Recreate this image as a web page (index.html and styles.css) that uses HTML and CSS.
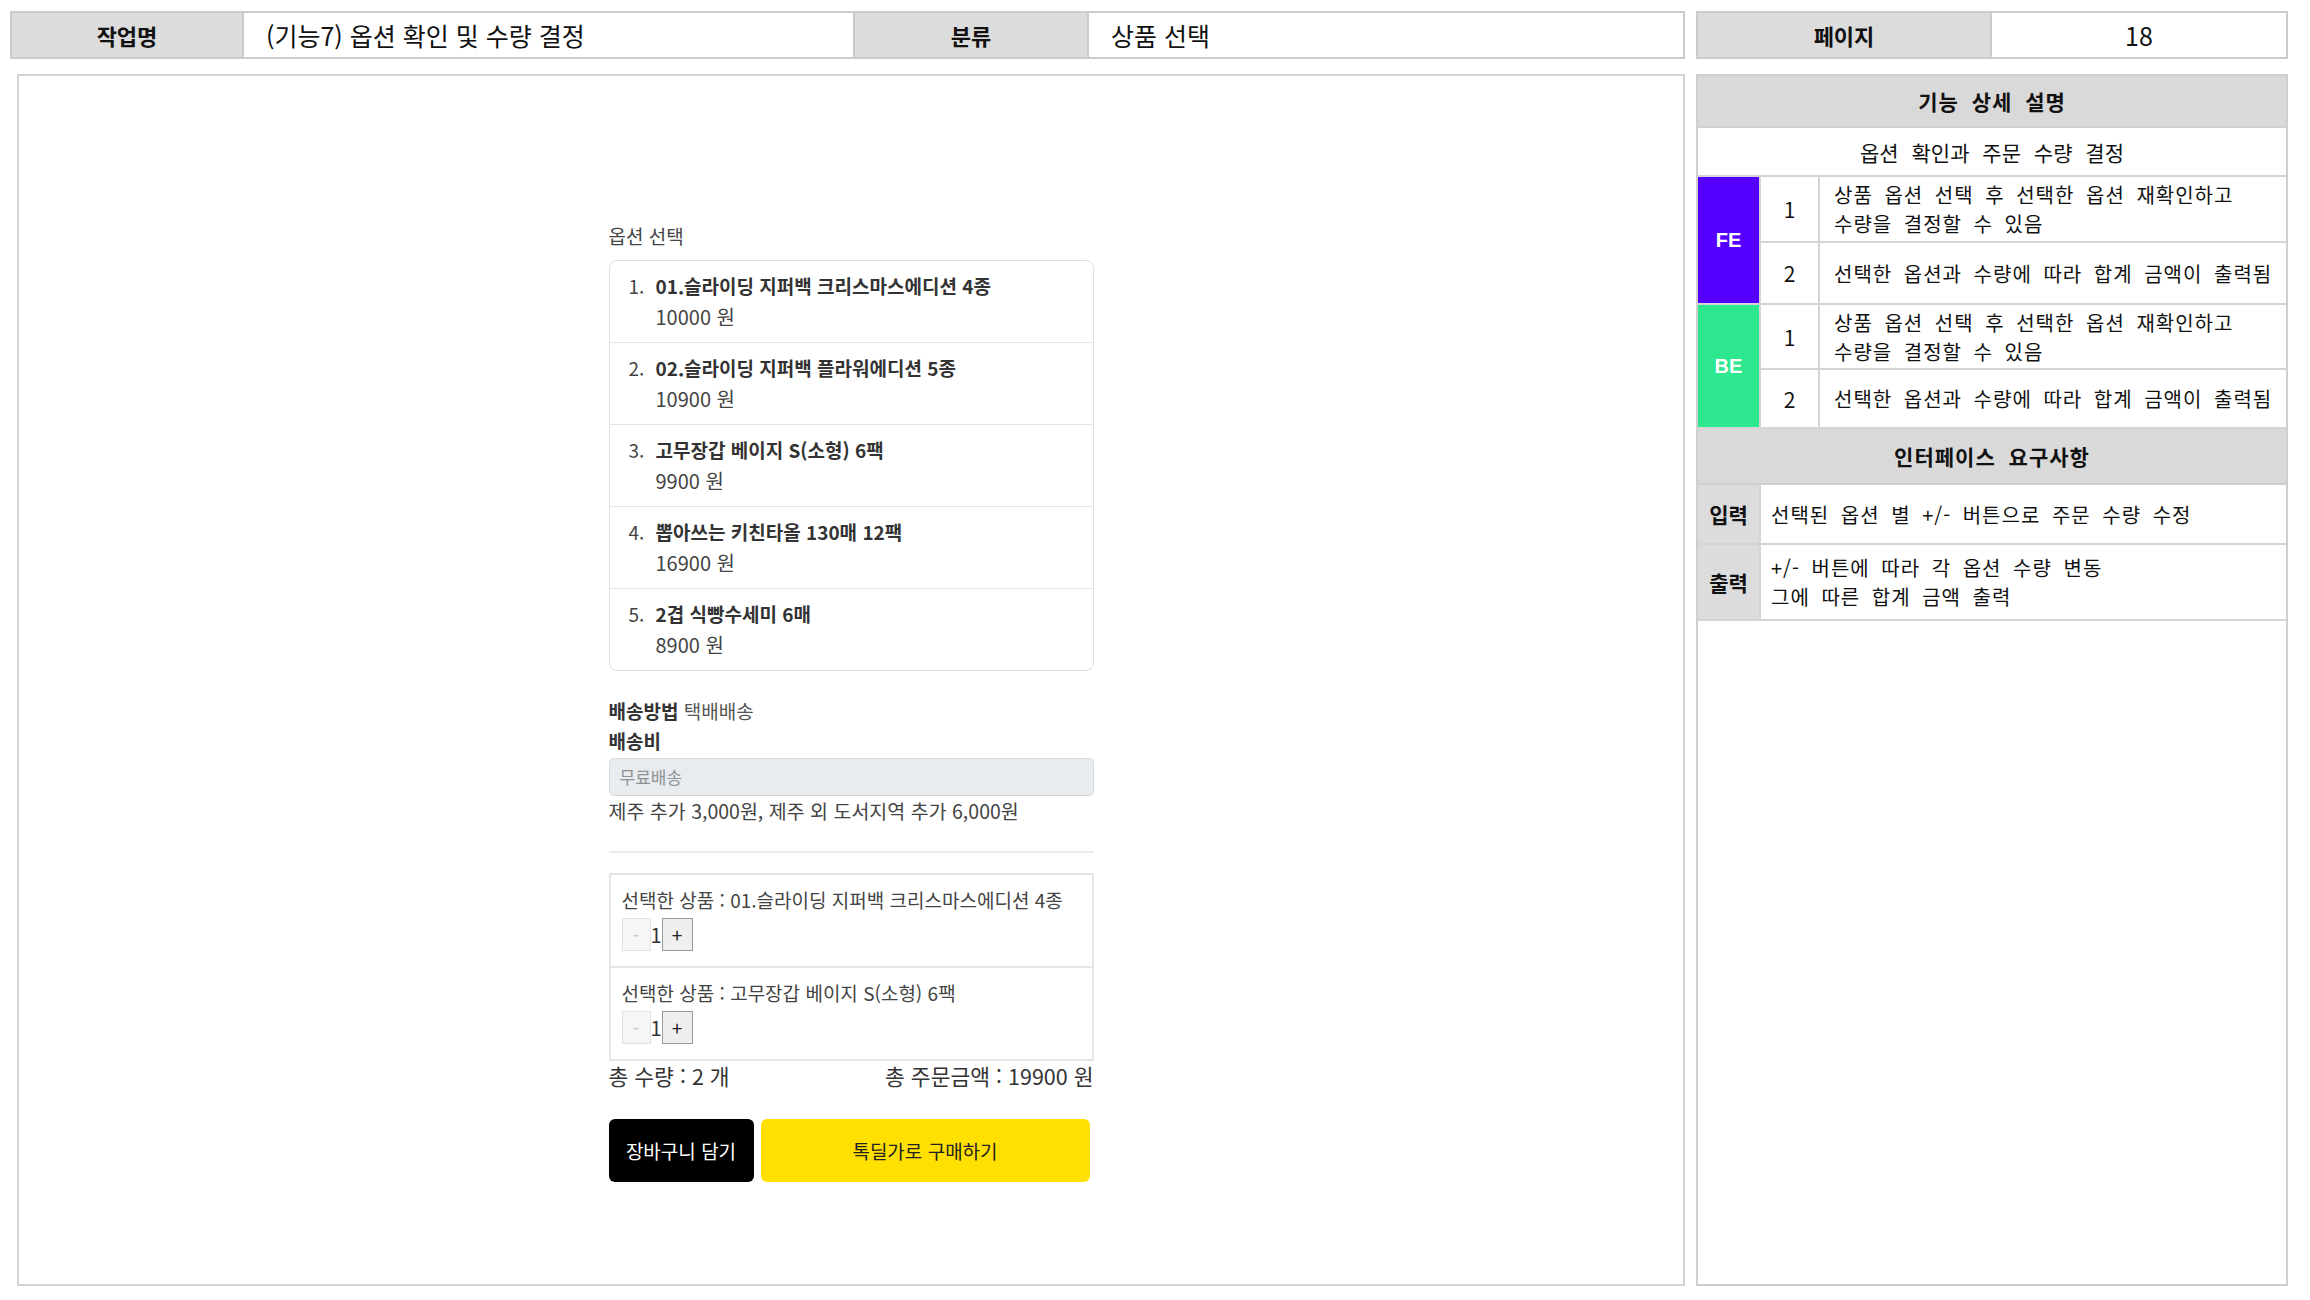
FILE: index.html
```html
<!DOCTYPE html>
<html lang="ko">
<head>
<meta charset="utf-8">
<title>옵션 확인 및 수량 결정</title>
<link rel="stylesheet" href="styles.css">
</head>
<body>
<div class="page">
  <div class="top">
    <div class="meta">
      <div class="cell lab c-job">작업명</div>
      <div class="cell val c-title">(기능7) 옵션 확인 및 수량 결정</div>
      <div class="cell lab c-cat">분류</div>
      <div class="cell val c-catv">상품 선택</div>
    </div>
    <div class="pagebox">
      <div class="cell lab c-pg">페이지</div>
      <div class="cell num">18</div>
    </div>
  </div>

  <div class="main">
    <div class="canvas">
      <div class="mob">
        <div class="optlabel">옵션 선택</div>
        <ol class="opts">
          <li class="opt"><span class="idx">1.</span><div><div class="ttl">01.슬라이딩 지퍼백 크리스마스에디션 4종</div><div class="price">10000 원</div></div></li>
          <li class="opt"><span class="idx">2.</span><div><div class="ttl">02.슬라이딩 지퍼백 플라워에디션 5종</div><div class="price">10900 원</div></div></li>
          <li class="opt"><span class="idx">3.</span><div><div class="ttl">고무장갑 베이지 S(소형) 6팩</div><div class="price">9900 원</div></div></li>
          <li class="opt"><span class="idx">4.</span><div><div class="ttl">뽑아쓰는 키친타올 130매 12팩</div><div class="price">16900 원</div></div></li>
          <li class="opt"><span class="idx">5.</span><div><div class="ttl">2겹 식빵수세미 6매</div><div class="price">8900 원</div></div></li>
        </ol>

        <div class="ship ship-first"><b>배송방법</b> 택배배송</div>
        <div class="ship"><b>배송비</b></div>
        <div class="fee">무료배송</div>
        <div class="note">제주 추가 3,000원, 제주 외 도서지역 추가 6,000원</div>
        <div class="rule"></div>

        <div class="sel">
          <div class="selitem">
            <div class="seltxt">선택한 상품 : 01.슬라이딩 지퍼백 크리스마스에디션 4종</div>
            <div class="qty"><span class="qb minus">-</span><span class="qv">1</span><span class="qb plus">+</span></div>
          </div>
          <div class="selitem">
            <div class="seltxt">선택한 상품 : 고무장갑 베이지 S(소형) 6팩</div>
            <div class="qty"><span class="qb minus">-</span><span class="qv">1</span><span class="qb plus">+</span></div>
          </div>
        </div>

        <div class="totals"><span>총 수량 : 2 개</span><span>총 주문금액 : 19900 원</span></div>

        <div class="btns">
          <div class="btn cart">장바구니 담기</div>
          <div class="btn buy">톡딜가로 구매하기</div>
        </div>
      </div>
    </div>

    <div class="spec">
      <div class="sh h1">기능 상세 설명</div>
      <div class="sum">옵션 확인과 주문 수량 결정</div>
      <div class="fg">
        <div class="tag fe">FE</div>
        <div class="n r1">1</div><div class="d r1">상품 옵션 선택 후 선택한 옵션 재확인하고<br>수량을 결정할 수 있음</div>
        <div class="n r2">2</div><div class="d r2">선택한 옵션과 수량에 따라 합계 금액이 출력됨</div>
        <div class="tag be">BE</div>
        <div class="n r3">1</div><div class="d r3">상품 옵션 선택 후 선택한 옵션 재확인하고<br>수량을 결정할 수 있음</div>
        <div class="n r4">2</div><div class="d r4">선택한 옵션과 수량에 따라 합계 금액이 출력됨</div>
      </div>
      <div class="sh h2">인터페이스 요구사항</div>
      <div class="ig">
        <div class="il">입력</div><div class="d">선택된 옵션 별 +/- 버튼으로 주문 수량 수정</div>
        <div class="il">출력</div><div class="d">+/- 버튼에 따라 각 옵션 수량 변동<br>그에 따른 합계 금액 출력</div>
      </div>
    </div>
  </div>
</div>
</body>
</html>
```

FILE: styles.css
```css
* { box-sizing: border-box; }
html, body { margin: 0; padding: 0; background: #fff; }
body { font-family: "Noto Sans CJK KR", "Noto Sans", sans-serif; color: #111; }

.page { width: 2310px; padding: 11px 22px 0 10px; }

/* top bar */
.top { display: flex; gap: 11px; height: 48px; }
.meta { width: 1675px; display: grid; grid-template-columns: 232px 611px 234px 1fr; border: 2px solid #cbcbcb; }
.pagebox { width: 592px; display: grid; grid-template-columns: 294px 1fr; border: 2px solid #cbcbcb; }
.cell { display: flex; align-items: center; font-size: 21px; border-right: 2px solid #cbcbcb; }
.cell:last-child { border-right: none; }
.lab { background: #dcdcdc; justify-content: center; font-weight: 700; font-size: 22px; }
.val { padding-left: 22px; font-weight: 400; font-size: 25px; }
.num { justify-content: center; font-size: 25px; }

/* main row */
.main { display: flex; gap: 11px; margin-top: 15px; margin-left: 7px; height: 1212px; }
.canvas { width: 1668px; border: 2px solid #d2d2d2; padding-top: 147px; }
.spec { width: 592px; border: 2px solid #cfcfcf; display: flex; flex-direction: column; }

/* mobile content */
.mob { width: 485px; margin: 0 auto; color: #333; font-family: "Noto Sans CJK KR", sans-serif; }
.optlabel { font-size: 19px; line-height: 26px; margin-bottom: 11px; color: #444; }
.opts { list-style: none; margin: 0; padding: 0; border: 1px solid #dfdfdf; border-radius: 8px; }
.opt { display: flex; padding: 11px 20px 9px 19px; border-top: 1px solid #e4e4e4; }
.opt:first-child { border-top: none; }
.idx { width: 27px; font-size: 19px; line-height: 28px; color: #444; }
.ttl { font-weight: 700; font-size: 19px; line-height: 28px; color: #333; }
.price { font-size: 20px; line-height: 33px; color: #444; }

.ship { font-size: 19px; line-height: 30px; color: #555; }
.ship b { color: #333; }
.ship-first { margin-top: 25px; }
.fee { margin-top: 2px; height: 38px; background: #e9ecef; border: 1px solid #d4d8dc; border-radius: 5px; padding-left: 10px; font-size: 17px; line-height: 36px; color: #8d9296; }
.note { margin-top: 2px; font-size: 19.5px; line-height: 26px; color: #444; }
.rule { margin-top: 27px; height: 2px; background: #ebebeb; }

.sel { margin-top: 20px; border: 2px solid #e6e6e6; }
.selitem { padding: 13px 12px 15px 11px; }
.selitem + .selitem { border-top: 2px solid #e6e6e6; }
.seltxt { font-size: 19px; line-height: 24px; color: #444; }
.qty { display: flex; align-items: center; margin-top: 6px; height: 33px; }
.qb { display: flex; align-items: center; justify-content: center; height: 33px; font-size: 19px; }
.minus { width: 29px; background: #f6f6f6; border: 1px solid #e2e2e2; color: #c8c8c8; }
.qv { width: 9px; font-size: 20px; color: #333; text-align: center; }
.plus { width: 31px; background: #efefef; border: 1px solid #9a9a9a; color: #222; margin-left: 2px; }

.totals { display: flex; justify-content: space-between; font-size: 21.5px; line-height: 30px; color: #333; }

.btns { display: flex; gap: 7px; margin-top: 28px; }
.btn { height: 63px; border-radius: 6px; display: flex; align-items: center; justify-content: center; font-size: 19px; }
.cart { width: 145px; background: #000; color: #fff; }
.buy { width: 329px; background: #ffe000; color: #222; }

/* spec panel */
.sh { background: #d9d9d9; display: flex; align-items: center; justify-content: center; font-weight: 700; font-size: 21px; letter-spacing: 1px; word-spacing: 6px; border-bottom: 2px solid #cfcfcf; }
.h1 { height: 52px; }
.h2 { height: 56px; }
.sum { height: 49px; display: flex; align-items: center; justify-content: center; font-size: 21px; word-spacing: 7px; border-bottom: 2px solid #d4d4d4; }
.fg { display: grid; grid-template-columns: 61px 59px 1fr; grid-template-rows: 66px 62px 65px 59px; }
.tag { grid-row: span 2; display: flex; align-items: center; justify-content: center; color: #fff; font-weight: 700; font-size: 20px; font-family: "Liberation Sans", Arial, sans-serif; border-bottom: 2px solid #d4d4d4; }
.fe { background: #5500ff; }
.be { background: #2ee88f; }
.n { display: flex; align-items: center; justify-content: center; font-size: 21px; border-left: 2px solid #d4d4d4; border-bottom: 2px solid #d4d4d4; }
.d { display: flex; align-items: center; padding-left: 14px; font-size: 20px; line-height: 29px; letter-spacing: 1px; word-spacing: 5px; border-left: 2px solid #d4d4d4; border-bottom: 2px solid #d4d4d4; }
.ig { display: grid; grid-template-columns: 61px 1fr; grid-template-rows: 60px 76px; }
.il { background: #dcdcdc; display: flex; align-items: center; justify-content: center; font-weight: 700; font-size: 21px; border-bottom: 2px solid #d4d4d4; }
.ig .d { padding-left: 10px; }
```
